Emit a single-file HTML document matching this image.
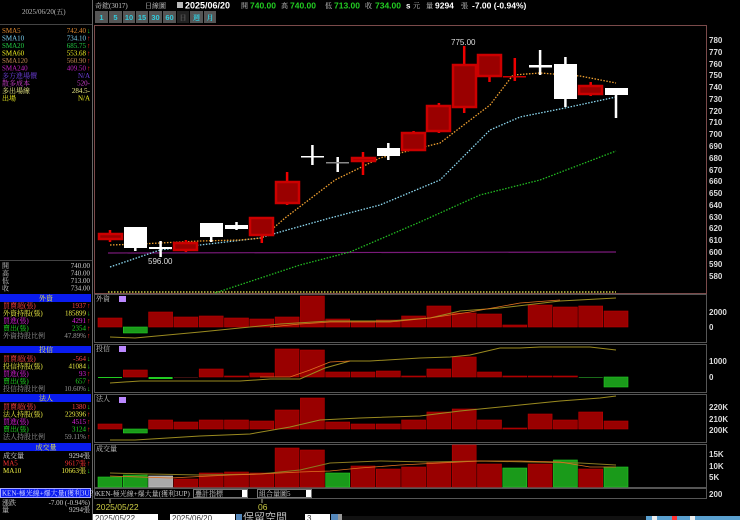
<!DOCTYPE html>
<html><head><meta charset="utf-8"><style>
html,body{margin:0;padding:0;background:#000;width:740px;height:520px;overflow:hidden}
svg{display:block}
text{font-family:"Liberation Sans","Noto Sans CJK TC",sans-serif;font-size:7.5px}
.s{font-family:"Liberation Serif","Noto Serif CJK SC",serif;font-size:7px}
.ax{fill:#ddd;font-size:8px;font-weight:bold}
</style></head><body>
<svg width="740" height="520" viewBox="0 0 740 520" xmlns="http://www.w3.org/2000/svg">
<rect width="740" height="520" fill="#000"/>
<!-- header -->
<text x="95" y="8" class="s" fill="#ccc">奇鋐(3017)</text>
<text x="145" y="8" class="s" fill="#ccc">日線圖</text>
<rect x="177" y="2" width="6" height="6" fill="#bbb"/>
<text x="185" y="8.5" fill="#fff" font-weight="bold" style="font-size:9px">2025/06/20</text>
<text x="241" y="8" class="s" fill="#ccc">開</text><text x="250" y="8.5" fill="#2c2" font-weight="bold" style="font-size:8.5px">740.00</text>
<text x="281" y="8" class="s" fill="#ccc">高</text><text x="290" y="8.5" fill="#2c2" font-weight="bold" style="font-size:8.5px">740.00</text>
<text x="325" y="8" class="s" fill="#ccc">低</text><text x="334" y="8.5" fill="#2c2" font-weight="bold" style="font-size:8.5px">713.00</text>
<text x="365" y="8" class="s" fill="#ccc">收</text><text x="375" y="8.5" fill="#2c2" font-weight="bold" style="font-size:8.5px">734.00</text>
<text x="406" y="8.5" fill="#fff" font-weight="bold" style="font-size:8px">s</text>
<text x="413" y="8" class="s" fill="#ccc">元</text>
<text x="426" y="8" class="s" fill="#ccc">量</text>
<text x="435" y="8.5" fill="#fff" font-weight="bold" style="font-size:8.5px">9294</text>
<text x="461" y="8" class="s" fill="#ccc">張</text>
<text x="472" y="8.5" fill="#fff" font-weight="bold" style="font-size:8.5px">-7.00 (-0.94%)</text>
<!-- buttons -->
<g fill="#555"><rect x="95" y="11" width="13" height="12"/><rect x="109" y="11" width="13" height="12"/><rect x="123" y="11" width="12" height="12"/><rect x="136" y="11" width="12" height="12"/><rect x="149" y="11" width="13" height="12"/><rect x="163" y="11" width="13" height="12"/><rect x="177" y="11" width="12" height="12" fill="#222"/><rect x="190" y="11" width="13" height="12"/><rect x="204" y="11" width="12" height="12"/></g>
<g fill="#3cd" font-weight="bold" style="font-size:7.5px" text-anchor="middle"><text x="101.5" y="20">1</text><text x="115.5" y="20">5</text><text x="129" y="20">10</text><text x="142" y="20">15</text><text x="155.5" y="20">30</text><text x="169.5" y="20">60</text><text x="183" y="20" fill="#555" class="s">日</text><text x="196.5" y="20" class="s">週</text><text x="210" y="20" class="s">月</text></g>
<!-- left panel -->
<text x="22" y="14" class="s" fill="#bbb">2025/06/20(五)</text>
<line x1="0" y1="24.5" x2="92" y2="24.5" stroke="#444"/>
<line x1="92.5" y1="0" x2="92.5" y2="520" stroke="#666"/>
<g class="s">
<text x="2" y="33" class="s" fill="#e08a30">SMA5</text><text x="86" y="33" class="s" fill="#e08a30" text-anchor="end">742.40</text><text x="87" y="33" class="s" fill="#2c2">↓</text>
<text x="2" y="40.5" class="s" fill="#7cd0f0">SMA10</text><text x="86" y="40.5" class="s" fill="#7cd0f0" text-anchor="end">734.10</text><text x="87" y="40.5" class="s" fill="#e22">↑</text>
<text x="2" y="48" class="s" fill="#2c4">SMA20</text><text x="86" y="48" class="s" fill="#2c4" text-anchor="end">685.75</text><text x="87" y="48" class="s" fill="#e22">↑</text>
<text x="2" y="55.5" class="s" fill="#ee2">SMA60</text><text x="86" y="55.5" class="s" fill="#ee2" text-anchor="end">553.68</text><text x="87" y="55.5" class="s" fill="#e22">↑</text>
<text x="2" y="63" class="s" fill="#c08850">SMA120</text><text x="86" y="63" class="s" fill="#c08850" text-anchor="end">560.90</text><text x="87" y="63" class="s" fill="#e22">↑</text>
<text x="2" y="70.5" class="s" fill="#c020c0">SMA240</text><text x="86" y="70.5" class="s" fill="#c020c0" text-anchor="end">409.50</text><text x="87" y="70.5" class="s" fill="#e22">↑</text>
<text x="2" y="78" class="s" fill="#7040e0">多方進場價</text><text x="90" y="78" class="s" fill="#7040e0" text-anchor="end">N/A</text>
<text x="2" y="85.5" class="s" fill="#d040d0">散多成本</text><text x="90" y="85.5" class="s" fill="#d040d0" text-anchor="end">520-</text>
<text x="2" y="93" class="s" fill="#ee8">多出場線</text><text x="90" y="93" class="s" fill="#ee8" text-anchor="end">284.5-</text>
<text x="2" y="100.5" class="s" fill="#ee2">出場</text><text x="90" y="100.5" class="s" fill="#ee2" text-anchor="end">N/A</text>
</g>
<line x1="0" y1="260.5" x2="92" y2="260.5" stroke="#444"/>
<g class="s" fill="#ccc">
<text x="2" y="268" class="s" fill="#ccc">開</text><text x="90" y="268" class="s" fill="#ccc" text-anchor="end">740.00</text>
<text x="2" y="275.5" class="s" fill="#ccc">高</text><text x="90" y="275.5" class="s" fill="#ccc" text-anchor="end">740.00</text>
<text x="2" y="283" class="s" fill="#ccc">低</text><text x="90" y="283" class="s" fill="#ccc" text-anchor="end">713.00</text>
<text x="2" y="290.5" class="s" fill="#ccc">收</text><text x="90" y="290.5" class="s" fill="#ccc" text-anchor="end">734.00</text>
</g>
<!-- left sections -->
<rect x="0" y="294" width="91" height="8" fill="#0a1cf0"/><text x="46" y="300.5" class="s" fill="#ee4" text-anchor="middle">外資</text>
<text x="3" y="308" class="s" fill="#f44">買賣超(張)</text><text x="86" y="308" class="s" fill="#f44" text-anchor="end">1937</text><text x="87" y="308" class="s" fill="#e22">↑</text>
<text x="3" y="315.5" class="s" fill="#ee4">外資持股(張)</text><text x="86" y="315.5" class="s" fill="#ee4" text-anchor="end">185899</text><text x="87" y="315.5" class="s" fill="#2c2">↓</text>
<text x="3" y="323" class="s" fill="#d2d">買進(張)</text><text x="86" y="323" class="s" fill="#d2d" text-anchor="end">4291</text><text x="87" y="323" class="s" fill="#e22">↑</text>
<text x="3" y="330.5" class="s" fill="#2d2">賣出(張)</text><text x="86" y="330.5" class="s" fill="#2d2" text-anchor="end">2354</text><text x="87" y="330.5" class="s" fill="#e22">↑</text>
<text x="3" y="338" class="s" fill="#999">外資持股比例</text><text x="86" y="338" class="s" fill="#999" text-anchor="end">47.89%</text><text x="87" y="338" class="s" fill="#e22">↑</text>
<rect x="0" y="346" width="91" height="7" fill="#0a1cf0"/><text x="46" y="352" class="s" fill="#ee4" text-anchor="middle">投信</text>
<text x="3" y="361" class="s" fill="#f44">買賣超(張)</text><text x="86" y="361" class="s" fill="#f44" text-anchor="end">-564</text><text x="87" y="361" class="s" fill="#2c2">↓</text>
<text x="3" y="368.5" class="s" fill="#ee4">投信持股(張)</text><text x="86" y="368.5" class="s" fill="#ee4" text-anchor="end">41084</text><text x="87" y="368.5" class="s" fill="#2c2">↓</text>
<text x="3" y="376" class="s" fill="#d2d">買進(張)</text><text x="86" y="376" class="s" fill="#d2d" text-anchor="end">93</text><text x="87" y="376" class="s" fill="#e22">↑</text>
<text x="3" y="383.5" class="s" fill="#2d2">賣出(張)</text><text x="86" y="383.5" class="s" fill="#2d2" text-anchor="end">657</text><text x="87" y="383.5" class="s" fill="#e22">↑</text>
<text x="3" y="391" class="s" fill="#999">投信持股比例</text><text x="86" y="391" class="s" fill="#999" text-anchor="end">10.60%</text><text x="87" y="391" class="s" fill="#2c2">↓</text>
<rect x="0" y="394" width="91" height="8" fill="#0a1cf0"/><text x="46" y="400.5" class="s" fill="#ee4" text-anchor="middle">法人</text>
<text x="3" y="409" class="s" fill="#f44">買賣超(張)</text><text x="86" y="409" class="s" fill="#f44" text-anchor="end">1380</text><text x="87" y="409" class="s" fill="#2c2">↓</text>
<text x="3" y="416.5" class="s" fill="#ee4">法人持股(張)</text><text x="86" y="416.5" class="s" fill="#ee4" text-anchor="end">229396</text><text x="87" y="416.5" class="s" fill="#e22">↑</text>
<text x="3" y="424" class="s" fill="#d2d">買進(張)</text><text x="86" y="424" class="s" fill="#d2d" text-anchor="end">4515</text><text x="87" y="424" class="s" fill="#e22">↑</text>
<text x="3" y="431.5" class="s" fill="#2d2">賣出(張)</text><text x="86" y="431.5" class="s" fill="#2d2" text-anchor="end">3124</text><text x="87" y="431.5" class="s" fill="#e22">↑</text>
<text x="3" y="439" class="s" fill="#999">法人持股比例</text><text x="86" y="439" class="s" fill="#999" text-anchor="end">59.11%</text><text x="87" y="439" class="s" fill="#e22">↑</text>
<rect x="0" y="443" width="91" height="8" fill="#0a1cf0"/><text x="46" y="449.5" class="s" fill="#ee4" text-anchor="middle">成交量</text>
<text x="3" y="458" class="s" fill="#ddd">成交量</text><text x="90" y="458" class="s" fill="#ddd" text-anchor="end">9294張</text>
<text x="3" y="465.5" class="s" fill="#f33">MA5</text><text x="86" y="465.5" class="s" fill="#f33" text-anchor="end">9617張</text><text x="87" y="465.5" class="s" fill="#e22">↑</text>
<text x="3" y="473" class="s" fill="#ee4">MA10</text><text x="86" y="473" class="s" fill="#ee4" text-anchor="end">10663張</text><text x="87" y="473" class="s" fill="#2c2">↓</text>
<rect x="0" y="488" width="91" height="10" fill="#0a1cf0"/><rect x="0.5" y="488.5" width="90" height="9" fill="none" stroke="#aaf"/>
<text x="2" y="495.5" class="s" fill="#ddf">KEN-極光線+爆大量(獲利3UP)</text>
<text x="2" y="505" class="s" fill="#ccc">漲跌</text><text x="90" y="505" class="s" fill="#ccc" text-anchor="end">-7.00 (-0.94%)</text>
<text x="2" y="512" class="s" fill="#ccc">量</text><text x="90" y="512" class="s" fill="#ccc" text-anchor="end">9294張</text>

<!-- main chart frame -->
<rect x="94.5" y="25.5" width="612" height="268" fill="none" stroke="#7a4a4a"/>
<g class="ax">
<text x="709" y="43" class="ax">780</text><text x="709" y="55" class="ax">770</text><text x="709" y="67" class="ax">760</text><text x="709" y="78" class="ax">750</text><text x="709" y="90" class="ax">740</text><text x="709" y="102" class="ax">730</text><text x="709" y="114" class="ax">720</text><text x="709" y="125" class="ax">710</text><text x="709" y="137" class="ax">700</text><text x="709" y="149" class="ax">690</text><text x="709" y="161" class="ax">680</text><text x="709" y="173" class="ax">670</text><text x="709" y="184" class="ax">660</text><text x="709" y="196" class="ax">650</text><text x="709" y="208" class="ax">640</text><text x="709" y="220" class="ax">630</text><text x="709" y="231" class="ax">620</text><text x="709" y="243" class="ax">610</text><text x="709" y="255" class="ax">600</text><text x="709" y="267" class="ax">590</text><text x="709" y="279" class="ax">580</text>
</g>
<!-- purple line -->
<line x1="108" y1="253" x2="616" y2="252" stroke="#7a1a7a" stroke-width="1.2"/>
<!-- yellow dotted base -->
<line x1="108" y1="292" x2="616" y2="292" stroke="#cc4" stroke-width="1.5" stroke-dasharray="1.5,1.5"/>
<!-- MAs -->
<polyline points="215,293 300,265 350,252 420,222 480,195 540,180 616,151" fill="none" stroke="#2b2" stroke-width="1.3" stroke-dasharray="1.5,1.5"/>
<polyline points="110,267 160,250 200,245 260,238 280,232 330,218 380,205 440,180 490,130 520,117 565,108 616,97" fill="none" stroke="#8cd8f0" stroke-width="1.3" stroke-dasharray="1.5,1.5"/>
<polyline points="110,245 140,244 200,241 240,240 262,238 285,218 335,180 380,158 440,143 490,105 513,75 540,73 580,76 616,83" fill="none" stroke="#f0a030" stroke-width="1.3" stroke-dasharray="1.5,1.5"/>
<!-- candles -->
<g stroke-width="2.5">
<line x1="110" y1="230" x2="110" y2="242" stroke="#e00"/><rect x="99" y="234" width="23" height="5" fill="#9a0000" stroke="#c00"/>
<line x1="135.3" y1="227" x2="135.3" y2="251" stroke="#fff"/><rect x="124" y="227" width="23" height="21" fill="#fff"/>
<line x1="160.6" y1="241" x2="160.6" y2="257" stroke="#fff"/><rect x="149" y="247" width="23" height="2" fill="#fff"/>
<line x1="185.9" y1="240" x2="185.9" y2="252" stroke="#e00"/><rect x="174" y="243" width="23" height="7" fill="#9a0000" stroke="#c00"/>
<line x1="211.2" y1="223" x2="211.2" y2="242" stroke="#fff"/><rect x="200" y="223" width="23" height="14" fill="#fff"/>
<line x1="236.5" y1="222" x2="236.5" y2="230" stroke="#fff"/><rect x="225" y="225" width="23" height="4" fill="#fff"/>
<line x1="261.8" y1="218" x2="261.8" y2="243" stroke="#e00"/><rect x="250" y="218" width="23" height="17" fill="#9a0000" stroke="#c00"/>
<line x1="287.1" y1="172" x2="287.1" y2="205" stroke="#e00"/><rect x="276" y="182" width="23" height="21" fill="#9a0000" stroke="#c00"/>
<line x1="312.4" y1="145" x2="312.4" y2="165" stroke="#fff"/><rect x="301" y="156" width="23" height="1.5" fill="#fff"/>
<line x1="337.7" y1="157" x2="337.7" y2="172" stroke="#fff"/><rect x="326" y="162" width="23" height="1.5" fill="#888"/>
<line x1="363" y1="152" x2="363" y2="175" stroke="#e00"/><rect x="352" y="158" width="23" height="3" fill="#9a0000" stroke="#c00"/>
<line x1="388.3" y1="143" x2="388.3" y2="160" stroke="#fff"/><rect x="377" y="148" width="23" height="8" fill="#fff"/>
<line x1="413.6" y1="131" x2="413.6" y2="151" stroke="#e00"/><rect x="402" y="133" width="23" height="17" fill="#9a0000" stroke="#c00"/>
<line x1="438.9" y1="103" x2="438.9" y2="133" stroke="#e00"/><rect x="427" y="106" width="23" height="25" fill="#9a0000" stroke="#c00"/>
<line x1="464.2" y1="46" x2="464.2" y2="113" stroke="#e00"/><rect x="453" y="65" width="23" height="42" fill="#9a0000" stroke="#c00"/>
<line x1="489.5" y1="54" x2="489.5" y2="82" stroke="#e00"/><rect x="478" y="55" width="23" height="21" fill="#9a0000" stroke="#c00"/>
<line x1="514.8" y1="58" x2="514.8" y2="81" stroke="#e00"/><rect x="503" y="76" width="23" height="1.5" fill="#c00"/>
<line x1="540.1" y1="50" x2="540.1" y2="75" stroke="#fff"/><rect x="529" y="65" width="23" height="2.5" fill="#fff"/>
<line x1="565.4" y1="57" x2="565.4" y2="107" stroke="#fff"/><rect x="554" y="64" width="23" height="35" fill="#fff"/>
<line x1="590.7" y1="82" x2="590.7" y2="96" stroke="#e00"/><rect x="579" y="86" width="23" height="8" fill="#9a0000" stroke="#c00"/>
<line x1="616" y1="88" x2="616" y2="118" stroke="#fff"/><rect x="605" y="88" width="23" height="7" fill="#fff"/>
</g>
<text x="451" y="45" fill="#ddd" style="font-size:8px">775.00</text>
<text x="148" y="264" fill="#ddd" style="font-size:8px">596.00</text>

<!-- sub panels frames -->
<g fill="none" stroke="#555">
<rect x="94.5" y="294.5" width="612" height="48"/>
<rect x="94.5" y="344.5" width="612" height="48"/>
<rect x="94.5" y="394.5" width="612" height="48"/>
<rect x="94.5" y="444.5" width="612" height="43"/>
<rect x="94.5" y="488.5" width="612" height="10"/>
</g>
<text x="96" y="301" class="s" fill="#ccc">外資</text><rect x="119" y="296" width="7" height="6" fill="#b8f"/>
<text x="96" y="351" class="s" fill="#ccc">投信</text><rect x="119" y="346" width="7" height="6" fill="#b8f"/>
<text x="96" y="401" class="s" fill="#ccc">法人</text><rect x="119" y="397" width="7" height="6" fill="#b8f"/>
<text x="96" y="451" class="s" fill="#ccc">成交量</text>
<g class="ax"><text x="709" y="315" class="ax">2000</text><text x="709" y="330" class="ax">0</text>
<text x="709" y="364" class="ax">1000</text><text x="709" y="380" class="ax">0</text>
<text x="709" y="410" class="ax">220K</text><text x="709" y="422" class="ax">210K</text><text x="709" y="433" class="ax">200K</text>
<text x="709" y="457" class="ax">15K</text><text x="709" y="469" class="ax">10K</text><text x="709" y="480" class="ax">5K</text>
<text x="709" y="497" class="ax">200</text></g>

<!-- 外資 bars zero 327 -->
<g fill="#990000" stroke="#b00" stroke-width="0.6">
<rect x="98" y="318" width="24" height="9"/><rect x="148.6" y="312" width="24" height="15"/><rect x="173.9" y="317" width="24" height="10"/><rect x="199.2" y="316" width="24" height="11"/><rect x="224.5" y="318" width="24" height="9"/><rect x="249.8" y="319" width="24" height="8"/><rect x="275.1" y="317" width="24" height="10"/><rect x="300.4" y="296" width="24" height="31"/><rect x="325.7" y="319" width="24" height="8"/><rect x="351" y="321" width="24" height="6"/><rect x="376.3" y="320" width="24" height="7"/><rect x="401.6" y="316" width="24" height="11"/><rect x="426.9" y="306" width="24" height="21"/><rect x="452.2" y="313" width="24" height="14"/><rect x="477.5" y="314" width="24" height="13"/><rect x="502.8" y="325" width="24" height="2"/><rect x="528.1" y="305" width="24" height="22"/><rect x="553.4" y="307" width="24" height="20"/><rect x="578.7" y="306" width="24" height="21"/><rect x="604" y="311" width="24" height="16"/>
</g>
<rect x="123.3" y="327" width="24" height="6" fill="#1a9a1a" stroke="#2c2" stroke-width="0.6"/>
<polyline points="110,337 135,338 200,332 280,324 330,321 390,321 430,318 460,311 500,308 560,301 616,298" fill="none" stroke="#9a8a20" stroke-width="1"/>
<polyline points="270,327 300,324 330,322 390,322 430,318 470,312 520,303 560,300" fill="none" stroke="#e07020" stroke-width="0.8"/>

<!-- 投信 zero 377 -->
<g fill="#990000" stroke="#b00" stroke-width="0.6">
<rect x="123.3" y="370" width="24" height="7"/><rect x="199.2" y="369" width="24" height="8"/><rect x="224.5" y="376" width="24" height="1"/><rect x="249.8" y="373" width="24" height="4"/><rect x="275.1" y="349" width="24" height="28"/><rect x="300.4" y="350" width="24" height="27"/><rect x="325.7" y="372" width="24" height="5"/><rect x="351" y="372" width="24" height="5"/><rect x="376.3" y="371" width="24" height="6"/><rect x="401.6" y="376" width="24" height="1"/><rect x="426.9" y="369" width="24" height="8"/><rect x="452.2" y="357" width="24" height="20"/><rect x="477.5" y="372" width="24" height="5"/><rect x="502.8" y="376" width="24" height="1"/><rect x="528.1" y="376" width="24" height="1"/><rect x="553.4" y="376" width="24" height="1"/>
</g>
<rect x="98" y="377" width="24" height="1" fill="#2c2"/><rect x="148.6" y="377" width="24" height="2" fill="#2c2"/><rect x="173.9" y="377" width="24" height="1" fill="#3a1010"/><rect x="578.7" y="377" width="24" height="1" fill="#1a6a1a"/>
<rect x="604" y="377" width="24" height="10" fill="#1a9a1a" stroke="#2c2" stroke-width="0.6"/>
<polyline points="110,383 140,381 240,381 270,379 300,379 325,368 350,361 370,361 420,358 450,357 470,355 500,348 520,348 540,347 590,347 616,350" fill="none" stroke="#9a8a20" stroke-width="1"/>
<polyline points="260,377 290,377 310,370 330,362 350,361" fill="none" stroke="#e07020" stroke-width="0.8"/>

<!-- 法人 bottom 429 -->
<g fill="#990000" stroke="#b00" stroke-width="0.6">
<rect x="98" y="424" width="24" height="5"/><rect x="148.6" y="420" width="24" height="9"/><rect x="173.9" y="422" width="24" height="7"/><rect x="199.2" y="420" width="24" height="9"/><rect x="224.5" y="420" width="24" height="9"/><rect x="249.8" y="421" width="24" height="8"/><rect x="275.1" y="410" width="24" height="19"/><rect x="300.4" y="398" width="24" height="31"/><rect x="325.7" y="422" width="24" height="7"/><rect x="351" y="424" width="24" height="5"/><rect x="376.3" y="424" width="24" height="5"/><rect x="401.6" y="420" width="24" height="9"/><rect x="426.9" y="412" width="24" height="17"/><rect x="452.2" y="409" width="24" height="20"/><rect x="477.5" y="420" width="24" height="9"/><rect x="502.8" y="428" width="24" height="1"/><rect x="528.1" y="414" width="24" height="15"/><rect x="553.4" y="420" width="24" height="9"/><rect x="578.7" y="412" width="24" height="17"/><rect x="604" y="421" width="24" height="8"/>
</g>
<rect x="123.3" y="429" width="24" height="4" fill="#1a9a1a" stroke="#2c2" stroke-width="0.6"/>
<polyline points="110,440 135,440 200,436 250,434 290,427 320,420 360,418 420,416 460,411 480,409 520,405 560,401 600,398 616,396" fill="none" stroke="#9a8a20" stroke-width="1"/>

<!-- 成交量 base 487 -->
<g fill="#990000" stroke="#b00" stroke-width="0.6">
<rect x="173.9" y="479" width="24" height="8"/><rect x="199.2" y="473" width="24" height="14"/><rect x="224.5" y="472" width="24" height="15"/><rect x="249.8" y="473" width="24" height="14"/><rect x="275.1" y="448" width="24" height="39"/><rect x="300.4" y="450" width="24" height="37"/><rect x="351" y="466" width="24" height="21"/><rect x="376.3" y="469" width="24" height="18"/><rect x="401.6" y="467" width="24" height="20"/><rect x="426.9" y="462" width="24" height="25"/><rect x="452.2" y="445" width="24" height="42"/><rect x="477.5" y="464" width="24" height="23"/><rect x="528.1" y="464" width="24" height="23"/><rect x="578.7" y="469" width="24" height="18"/>
</g>
<g fill="#1a9a1a" stroke="#2c2" stroke-width="0.6">
<rect x="98" y="477" width="24" height="10"/><rect x="123.3" y="475" width="24" height="12"/><rect x="325.7" y="473" width="24" height="14"/><rect x="502.8" y="468" width="24" height="19"/><rect x="553.4" y="460" width="24" height="27"/><rect x="604" y="467" width="24" height="20"/>
</g>
<rect x="148.6" y="476" width="24" height="11" fill="#aaa" stroke="#ccc" stroke-width="0.6"/>
<polyline points="110,473 150,474 200,475 260,474 300,470 330,463 380,461 430,462 480,461 530,462 580,463 616,465" fill="none" stroke="#8a7a20" stroke-width="1"/>
<polyline points="110,476 170,478 230,475 260,474 300,472 330,471 360,468 400,465 440,463 480,461 520,461 560,462 590,467 616,467" fill="none" stroke="#e07020" stroke-width="0.8"/>

<!-- bottom strip -->
<text x="96" y="496" class="s" fill="#ccc">KEN-極光線+爆大量(獲利3UP)</text>
<rect x="193.5" y="489.5" width="54" height="8" fill="#000" stroke="#777"/><text x="195" y="496" class="s" fill="#ccc">疊計指標</text><rect x="242" y="490" width="5" height="7" fill="#fff"/>
<rect x="257.5" y="489.5" width="54" height="8" fill="#000" stroke="#777"/><text x="259" y="496" class="s" fill="#ccc">組合量圖5</text><rect x="306" y="490" width="5" height="7" fill="#fff"/>
<line x1="110" y1="499" x2="110" y2="503" stroke="#aa8"/><line x1="262" y1="499" x2="262" y2="503" stroke="#aa8"/>
<text x="96" y="510" fill="#cc4" style="font-size:8.5px">2025/05/22</text>
<text x="258" y="510" fill="#cc4" style="font-size:8.5px">06</text>
<rect x="93" y="514" width="65" height="6" fill="#fff"/><text x="95" y="521" fill="#333" style="font-size:8px">2025/05/22</text>
<rect x="170" y="514" width="65" height="6" fill="#fff"/><text x="172" y="521" fill="#333" style="font-size:8px">2025/06/20</text>
<rect x="236" y="514" width="6" height="6" fill="#58b"/>
<text x="243" y="521" fill="#bbb" style="font-size:11px" class="s2">保留空間</text>
<rect x="305" y="514" width="25" height="6" fill="#fff"/><text x="307" y="521" fill="#333" style="font-size:8px">3</text>
<rect x="331" y="514" width="7" height="6" fill="#58b"/><rect x="338" y="514" width="4" height="6" fill="#999"/>
<rect x="342" y="516" width="320" height="4" fill="#111"/>
<rect x="646" y="516" width="94" height="4" fill="#5aa0d0"/><rect x="652" y="516" width="5" height="4" fill="#eee"/><rect x="672" y="516" width="5" height="4" fill="#f33"/><rect x="690" y="516" width="5" height="4" fill="#eee"/>
</svg>
</body></html>
